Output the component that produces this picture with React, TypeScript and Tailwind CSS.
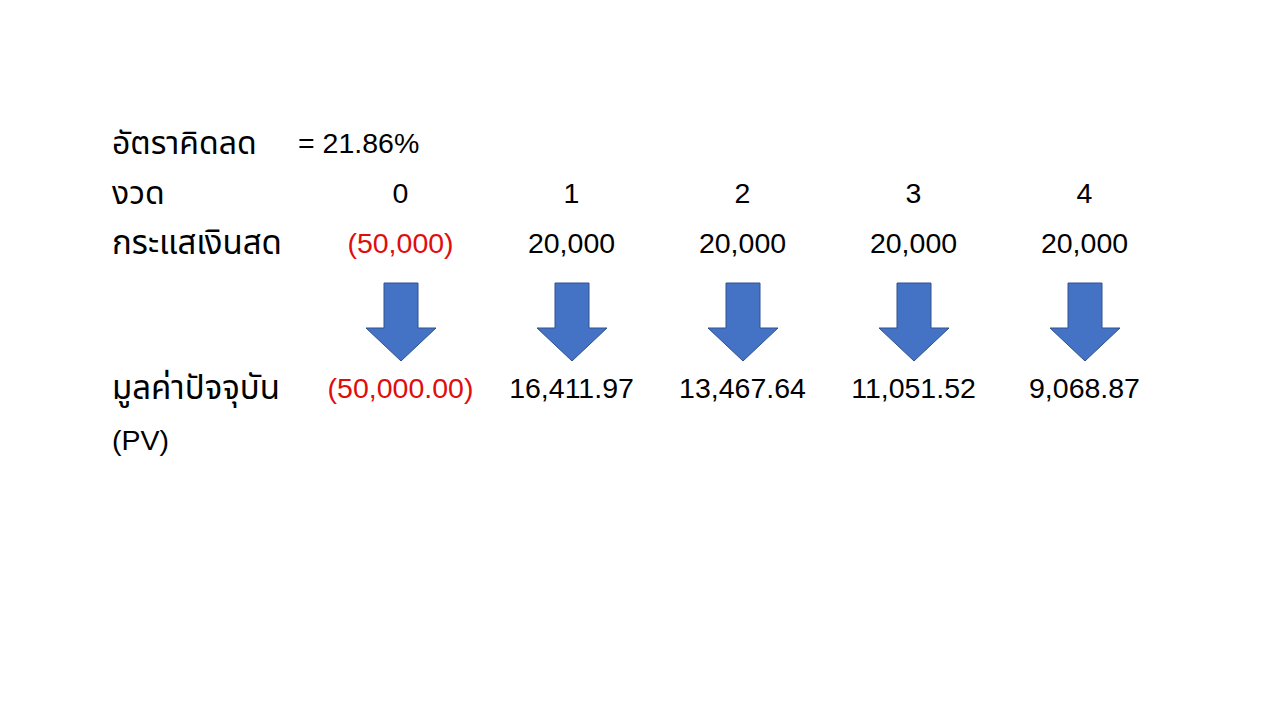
const cols = ['0', '1', '2', '3', '4'];
const cash = ['(50,000)', '20,000', '20,000', '20,000', '20,000'];
const pv = ['(50,000.00)', '16,411.97', '13,467.64', '11,051.52', '9,068.87'];

function DownArrow() {
  return (
    <svg width="72" height="80" viewBox="-1 -1 72 80">
      <polygon
        points="18,0 52,0 52,45 70,45 35,78 0,45 18,45"
        fill="#4472c4"
        stroke="#2f528f"
        strokeWidth="1"
      />
    </svg>
  );
}

export default function App() {
  return (
    <div
      className="w-[1280px] h-[720px] bg-white text-black text-[28.5px] leading-[50px] pt-[118px] pl-[112px]"
      style={{ fontFamily: '"Liberation Sans", "Noto Sans", "Noto Sans Thai", sans-serif' }}
    >
      {/* discount rate */}
      <div className="flex">
        <span className="w-[186px] text-[32px]">อัตราคิดลด</span>
        <span>= 21.86%</span>
      </div>

      <div className="grid grid-cols-[203px_repeat(5,171px)]">
        {/* period row */}
        <div className="text-[32px]">งวด</div>
        {cols.map((c) => (
          <div key={c} className="text-center">{c}</div>
        ))}

        {/* cash flow row */}
        <div className="text-[33px] whitespace-nowrap">กระแสเงินสด</div>
        {cash.map((v, i) => (
          <div key={i} className={i === 0 ? 'text-center text-[#e00d0d]' : 'text-center'}>{v}</div>
        ))}

        {/* arrows */}
        <div className="h-[95px]" />
        {cols.map((c) => (
          <div key={c} className="flex justify-center pt-[14px]">
            <DownArrow />
          </div>
        ))}

        {/* present value row */}
        <div className="text-[33px] whitespace-nowrap">มูลค่าปัจจุบัน</div>
        {pv.map((v, i) => (
          <div key={i} className={i === 0 ? 'text-center text-[#e00d0d] whitespace-nowrap' : 'text-center whitespace-nowrap'}>{v}</div>
        ))}
        <div className="mt-[2px]">(PV)</div>
      </div>
    </div>
  );
}
